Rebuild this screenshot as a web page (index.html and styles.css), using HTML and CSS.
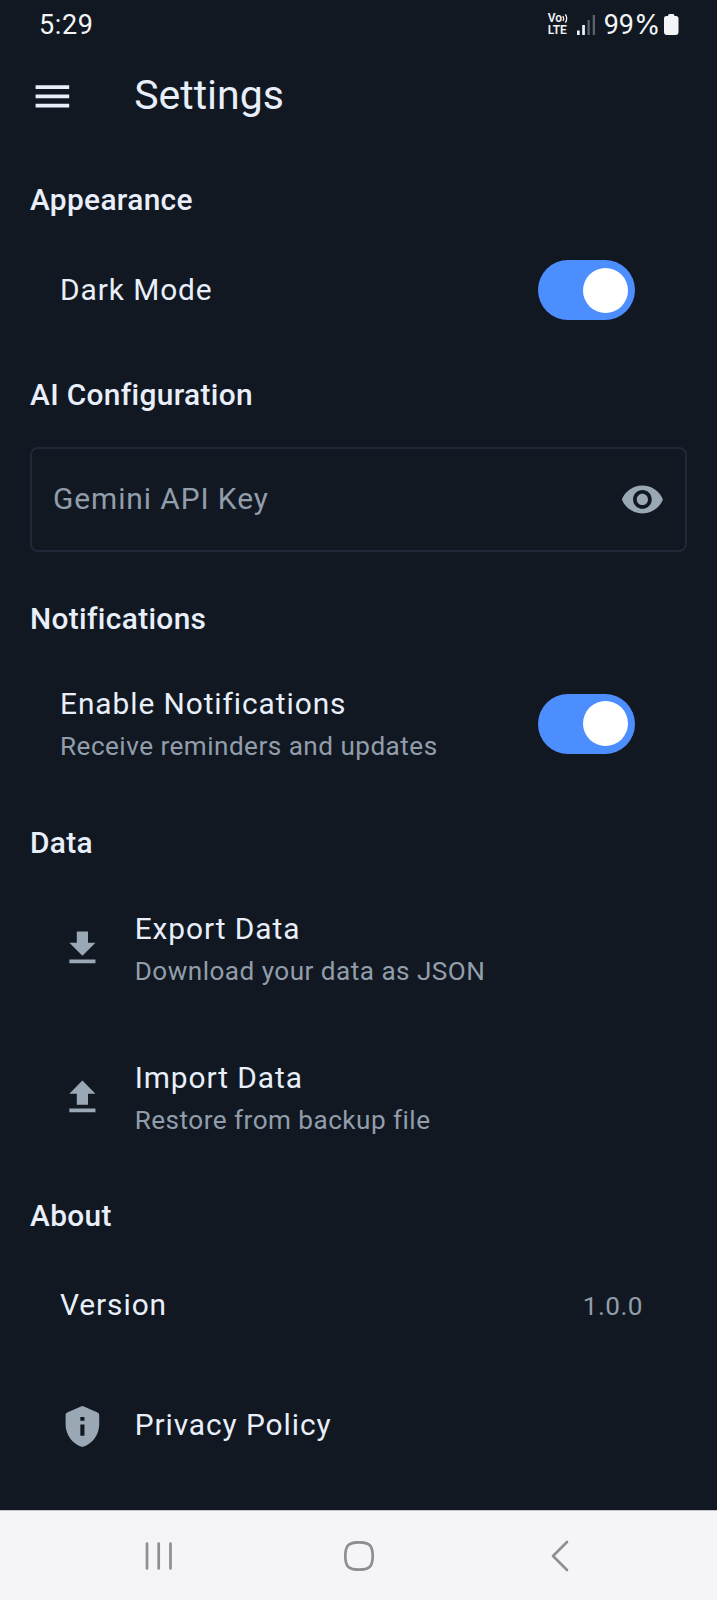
FILE: index.html
```html
<!DOCTYPE html>
<html lang="en">
<head>
<meta charset="utf-8">
<title>Settings</title>
<link rel="stylesheet" href="styles.css">
</head>
<body>
<div class="screen">
  <div class="status">
    <span class="clock">5:29</span>
    <div class="status-right">
      <div class="volte"><span class="vo">Vo<svg width="8" height="13" viewBox="0 0 8 13"><path d="M1 3.6Q3 6.5 1 9.4M4 1.6Q7.4 6.5 4 11.4" fill="none" stroke="currentColor" stroke-width="1.6"/></svg></span><span class="lte">LTE</span></div>
      <svg class="signal" width="19" height="20" viewBox="0 0 19 20"><path d="M0 15.500h2.700V20H0zM5.200 10h2.700v10H5.200z" fill="#eef1f5"/><path d="M10.500 5h2.300v15h-2.300zM15.700 0H18v20h-2.300z" fill="#5b6169"/></svg>
      <span class="percent">99<span class="sign">%</span></span>
      <svg class="battery" width="15" height="21" viewBox="0 0 15 21"><path d="M4 2Q4 0 5.500 0h3.500q1.500 0 1.500 2H12q2.500 0 2.500 2.500v13.500q0 3-3 3h-8.500q-3 0-3-3V4.500Q0 2 2.500 2z" fill="#f3f4f6"/></svg>
    </div>
  </div>

  <header class="appbar">
    <svg class="icon menu" viewBox="0 0 24 24"><path d="M3 18h18v-2H3v2zm0-5h18v-2H3v2zm0-7v2h18V6H3z"/></svg>
    <h1 class="title">Settings</h1>
  </header>

  <main>
    <section class="appearance">
      <h2 class="heading">Appearance</h2>
      <div class="row single">
        <span class="label">Dark Mode</span>
        <span class="toggle"><span class="thumb"></span></span>
      </div>
    </section>

    <section class="ai">
      <h2 class="heading">AI Configuration</h2>
      <div class="field">
        <span class="placeholder">Gemini API Key</span>
        <svg class="icon" viewBox="0 0 24 24"><path d="M12 4.500C7 4.500 2.730 7.610 1 12c1.730 4.390 6 7.500 11 7.500s9.270-3.110 11-7.500c-1.730-4.390-6-7.500-11-7.500zM12 17c-2.760 0-5-2.240-5-5s2.240-5 5-5 5 2.240 5 5-2.240 5-5 5zm0-8c-1.660 0-3 1.340-3 3s1.340 3 3 3 3-1.340 3-3-1.340-3-3-3z"/></svg>
      </div>
    </section>

    <section class="notifications">
      <h2 class="heading">Notifications</h2>
      <div class="row">
        <div class="texts">
          <span class="label">Enable Notifications</span>
          <span class="sub">Receive reminders and updates</span>
        </div>
        <span class="toggle"><span class="thumb"></span></span>
      </div>
    </section>

    <section class="data">
      <h2 class="heading">Data</h2>
      <div class="row">
        <svg class="icon" viewBox="0 0 24 24"><path d="M19 9h-4V3H9v6H5l7 7 7-7zM5 18v2h14v-2H5z"/></svg>
        <div class="texts">
          <span class="label">Export Data</span>
          <span class="sub">Download your data as JSON</span>
        </div>
      </div>
      <div class="row">
        <svg class="icon" viewBox="0 0 24 24"><path d="M9 16h6v-6h4l-7-7-7 7h4v6zm-4 2h14v2H5v-2z"/></svg>
        <div class="texts">
          <span class="label">Import Data</span>
          <span class="sub">Restore from backup file</span>
        </div>
      </div>
    </section>

    <section class="about">
      <h2 class="heading">About</h2>
      <div class="row single">
        <span class="label">Version</span>
        <span class="value">1.0.0</span>
      </div>
      <div class="row single">
        <svg class="icon" viewBox="0 0 24 24"><path d="M11.200 1.360l-7 3.110C3.470 4.790 3 5.100 3 5.900V11c0 5.550 3.840 10.740 9 12 5.160-1.260 9-6.450 9-12V5.900c0-.8-.47-1.110-1.190-1.430l-7-3.110c-.52-.23-1.110-.23-1.610 0zM10.900 6.900h2.200v2.100h-2.200V6.900zm0 4.100h2.200v6h-2.200v-6z"/></svg>
        <span class="label">Privacy Policy</span>
      </div>
    </section>
  </main>

  <nav class="navbar">
    <svg width="28" height="30" viewBox="0 0 28 30"><path d="M2 2.500v25M13.700 2.500v25M25.500 2.500v25"/></svg>
    <svg class="home" width="30" height="30" viewBox="0 0 30 30"><path d="M15 1.300C25.500 1.300 28.700 4.500 28.700 15S25.500 28.700 15 28.700 1.300 25.500 1.300 15 4.500 1.300 15 1.300z"/></svg>
    <svg class="back" width="18" height="32" viewBox="0 0 18 32"><path d="M16 2L2 16l14 14"/></svg>
  </nav>
</div>
</body>
</html>
```
FILE: styles.css
```css
* { box-sizing: border-box; }

body {
  margin: 0;
  background: #111821;
  color: #e8effa;
  font-family: Roboto, "Liberation Sans", sans-serif;
}

.screen {
  display: flex;
  flex-direction: column;
  width: 717px;
  height: 1600px;
}

.status {
  display: flex;
  justify-content: space-between;
  align-items: center;
  height: 49px;
  padding: 0 38.500px 0 39px;
  color: #f3f4f6;
  font-size: 27px;
}

.clock { letter-spacing: 0.600px; }
.status-right { display: flex; align-items: center; }

.volte {
  display: flex;
  flex-direction: column;
  width: 21px;
  font-size: 12px;
  font-weight: 600;
  line-height: 11.500px;
}

.vo { display: flex; align-items: center; height: 11.500px; }
.signal { margin-left: 8px; }
.percent { margin-left: 8px; }
.sign { font-family: Inter, Roboto, sans-serif; font-size: 27px; }
.battery { margin-left: 3px; }

.appbar {
  display: flex;
  align-items: center;
  height: 95px;
  padding-left: 29.700px;
}

.icon {
  flex: none;
  width: 44.800px;
  height: 44.800px;
  fill: #9aa8b5;
}

.menu { fill: #e8effa; }

.title {
  margin: 0 0 0 59.700px;
  padding-bottom: 3px;
  font-size: 41px;
  font-weight: 400;
  line-height: 52px;
}

main { padding-top: 10.500px; }

.heading {
  margin: 0;
  padding-left: 30px;
  font-size: 29.870px;
  font-weight: 500;
  line-height: 90px;
  letter-spacing: 0.330px;
}

.row {
  display: flex;
  align-items: center;
  height: 120px;
  padding: 0 82px 0 60px;
}

.single { height: 90px; }
.row > .icon { margin-right: 29.900px; }
.row > .toggle, .value { margin-left: auto; }
.texts { display: flex; flex-direction: column; gap: 3px; }

.label, .placeholder {
  font-size: 29.870px;
  line-height: 43px;
  letter-spacing: 0.930px;
}

.single > .label, .placeholder { padding-bottom: 3px; }
.appearance .single > .label { padding-bottom: 2px; }

.sub, .value {
  color: #929dab;
  font-size: 26.130px;
  line-height: 37px;
  letter-spacing: 0.470px;
}

.value { margin-right: -8px; padding-top: 1px; }

.toggle {
  display: flex;
  justify-content: flex-end;
  align-items: center;
  width: 97px;
  height: 60px;
  padding: 7.500px;
  border-radius: 30px;
  background: #4d8eff;
}

.thumb {
  width: 45px;
  height: 45px;
  border-radius: 50%;
  background: #fff;
}

.appearance { padding-bottom: 13.500px; }
.appearance .row { height: 91.500px; }

.field {
  display: flex;
  align-items: center;
  justify-content: space-between;
  height: 105px;
  margin: 7.500px 30px 21.500px;
  padding: 0 20.500px 0 21px;
  border: 2px solid #1f2937;
  border-radius: 8px;
}

.placeholder { color: #929dab; }

.notifications { padding-bottom: 14px; }
.notifications .row { height: 120.500px; }
.data { padding-bottom: 13.500px; }
.data .row + .row { margin-top: 29.500px; }
.about .row + .row { margin-top: 30px; }

.navbar {
  display: flex;
  align-items: center;
  height: 90px;
  margin-top: auto;
  padding: 0 0 0 144.500px;
  border-top: 1px solid #c4c5ca;
  background: #f5f5f8;
}

.home { margin-left: 171.500px; }
.back { margin-left: 177px; }

.navbar svg {
  fill: none;
  stroke: #8f8f91;
  stroke-width: 2.700px;
  stroke-linecap: round;
  stroke-linejoin: round;
}
```
